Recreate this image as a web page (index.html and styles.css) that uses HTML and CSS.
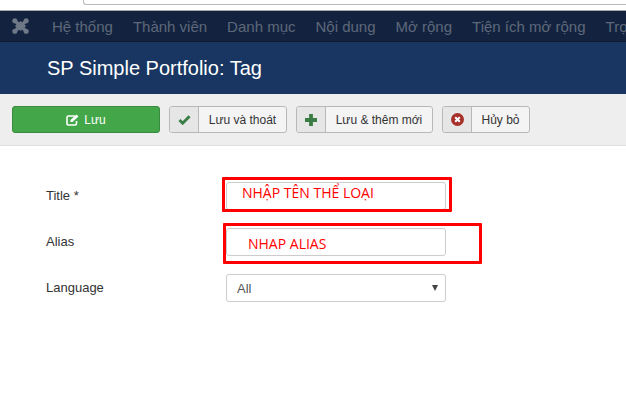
FILE: index.html
```html
<!DOCTYPE html>
<html lang="vi">

<head>
    <meta charset="UTF-8">
    <meta name="viewport" content="width=device-width, initial-scale=1.0">
    <title>SP Simple Portfolio: Tag</title>
    <link rel="stylesheet" href="styles.css">
</head>

<body>
    <div class="browser-bar">
        <div class="url-box"></div>
    </div>

    <nav class="topnav">
        <svg class="logo" width="17" height="16" viewBox="0 0 18 17">
            <g fill="none" stroke="#6f7886" stroke-width="3.400">
                <path d="M3.500 3.500L14.500 13.500M14.500 3.500L3.500 13.500"/>
                <path d="M4.500 8.500L9 4.500L13.500 8.500L9 12.500Z" stroke-width="2"/>
            </g>
            <circle cx="3" cy="3" r="2.700" fill="#6f7886"/>
            <circle cx="15" cy="3" r="2.700" fill="#6f7886"/>
            <circle cx="3" cy="14" r="2.700" fill="#6f7886"/>
            <circle cx="15" cy="14" r="2.700" fill="#6f7886"/>
        </svg>
        <a href="#">Hệ thống</a>
        <a href="#">Thành viên</a>
        <a href="#">Danh mục</a>
        <a href="#">Nội dung</a>
        <a href="#">Mở rộng</a>
        <a href="#">Tiện ích mở rộng</a>
        <a href="#">Trợ giúp</a>
    </nav>

    <div class="page-title">
        <h1>SP Simple Portfolio: Tag</h1>
    </div>

    <div class="toolbar">
        <button class="btn-save">
            <svg width="13" height="12" viewBox="0 0 13 12">
                <path d="M9 2H2.500A1.500 1.500 0 0 0 1 3.500V10A1.500 1.500 0 0 0 2.500 11H9A1.500 1.500 0 0 0 10.500 9.500V7" fill="none" stroke="#fff" stroke-width="1.600"/>
                <path d="M4.500 6L10.500 0.500L12.500 2.500L6.500 8H4.500Z" fill="#fff"/>
            </svg>
            Lưu
        </button>
        <button class="btn-group btn-apply">
            <span class="btn-icon">
                <svg width="13" height="11" viewBox="0 0 14 12">
                    <path d="M1.500 6.500L5 10L12.500 2.500" fill="none" stroke="#3a7d44" stroke-width="3.200"/>
                </svg>
            </span>
            <span class="btn-text">Lưu và thoát</span>
        </button>
        <button class="btn-group btn-new">
            <span class="btn-icon">
                <svg width="14" height="14" viewBox="0 0 14 14">
                    <path d="M7 1V13M1 7H13" fill="none" stroke="#3a7d44" stroke-width="3.800"/>
                </svg>
            </span>
            <span class="btn-text">Lưu &amp; thêm mới</span>
        </button>
        <button class="btn-group btn-cancel">
            <span class="btn-icon">
                <svg width="13" height="13" viewBox="0 0 13 13">
                    <circle cx="6.500" cy="6.500" r="6.500" fill="#a8302a"/>
                    <path d="M4.200 4.200L8.800 8.800M8.800 4.200L4.200 8.800" fill="none" stroke="#fff" stroke-width="2"/>
                </svg>
            </span>
            <span class="btn-text">Hủy bỏ</span>
        </button>
    </div>

    <div class="form-area">
        <div class="form-row">
            <label>Title *</label>
            <div class="field"></div>
        </div>
        <div class="form-row">
            <label>Alias</label>
            <div class="field"></div>
        </div>
        <div class="form-row">
            <label>Language</label>
            <div class="field select">
                <span>All</span>
                <span class="arrow"></span>
            </div>
        </div>

        <!-- red marks drawn over the screenshot -->
        <div class="mark mark-title"></div>
        <div class="mark mark-alias"></div>
        <span class="note note-title">NHẬP TÊN THỂ LOẠI</span>
        <span class="note note-alias">NHAP ALIAS</span>
    </div>
</body>

</html>
```

FILE: styles.css
```css
html, body {
    margin: 0;
    padding: 0;
}

body {
    width: 626px;
    height: 400px;
    overflow: hidden;
    background-color: #fff;
    font-family: "Liberation Sans", Arial, sans-serif;
    color: #333;
}

/* Browser strip on top */
.browser-bar {
    height: 10px;
    background-color: #fff;
    border-bottom: 1px solid #a8a8a8;
}

.url-box {
    margin-left: 83px;
    height: 4px;
    border: 1px solid #bbb;
    border-top: none;
    border-right: none;
    border-radius: 0 0 0 3px;
}

/* Navigation */
.topnav {
    display: flex;
    align-items: center;
    height: 30px;
    background-color: #13233f;
    border-bottom: 1px solid #0e1a30;
    white-space: nowrap;
    overflow: hidden;
}

.topnav .logo {
    margin: 0 23px 0 12px;
    flex-shrink: 0;
}

.topnav a {
    color: #5e687a;
    font-size: 15px;
    text-decoration: none;
    margin-right: 20px;
}

/* Title */
.page-title {
    height: 52px;
    display: flex;
    align-items: center;
    padding-left: 47px;
    background-color: #183661;
}

.page-title h1 {
    margin: 0;
    color: #fff;
    font-size: 20px;
    font-weight: normal;
}

/* Toolbar */
.toolbar {
    display: flex;
    align-items: flex-start;
    gap: 9px;
    height: 39px;
    padding: 12px 0 0 12px;
    background-color: #eee;
    border-bottom: 1px solid #e0e0e0;
}

.toolbar button {
    height: 27px;
    padding: 0;
    font-family: inherit;
    font-size: 12px;
    border-radius: 3px;
    cursor: pointer;
    box-sizing: border-box;
}

.btn-save {
    width: 148px;
    display: flex;
    align-items: center;
    justify-content: center;
    gap: 5px;
    color: #fff;
    background-color: #43a648;
    border: 1px solid #3b8a41;
}

.btn-group {
    display: flex;
    align-items: stretch;
    color: #333;
    background-color: #f4f4f4;
    border: 1px solid #b8b8b8;
}

.btn-icon {
    width: 28px;
    display: flex;
    align-items: center;
    justify-content: center;
    background-color: #e6e6e6;
    border-right: 1px solid #b8b8b8;
    border-radius: 3px 0 0 3px;
}

.btn-text {
    display: flex;
    align-items: center;
    justify-content: center;
    flex: 1;
}

.btn-apply {
    width: 118px;
}

.btn-new {
    width: 137px;
}

.btn-cancel {
    width: 88px;
}

/* Form */
.form-area {
    position: relative;
    padding: 36px 0 0 46px;
}

.form-row {
    display: flex;
    align-items: center;
    height: 28px;
    margin-bottom: 18px;
}

.form-row label {
    width: 180px;
    padding-bottom: 2px;
    font-size: 13px;
    color: #333;
}

.field {
    width: 220px;
    height: 28px;
    box-sizing: border-box;
    background-color: #fff;
    border: 1px solid #ccc;
    border-radius: 3px;
}

.select {
    display: flex;
    align-items: center;
    justify-content: space-between;
    padding: 0 7px 0 10px;
    font-size: 13px;
    color: #555;
}

.arrow {
    width: 0;
    height: 0;
    border-left: 3px solid transparent;
    border-right: 3px solid transparent;
    border-top: 6px solid #444;
}

/* Red annotations */
.mark {
    position: absolute;
    box-sizing: border-box;
    border: 3px solid #f00;
    border-radius: 1px;
}

.mark-title {
    left: 222px;
    top: 31px;
    width: 230px;
    height: 35px;
}

.mark-alias {
    left: 223px;
    top: 77px;
    width: 259px;
    height: 41px;
}

.note {
    position: absolute;
    color: #f00;
    font-family: "Open Sans", sans-serif;
    font-size: 14px;
    white-space: nowrap;
}

.note-title {
    left: 242px;
    top: 37px;
}

.note-alias {
    left: 248px;
    top: 88px;
}
```
